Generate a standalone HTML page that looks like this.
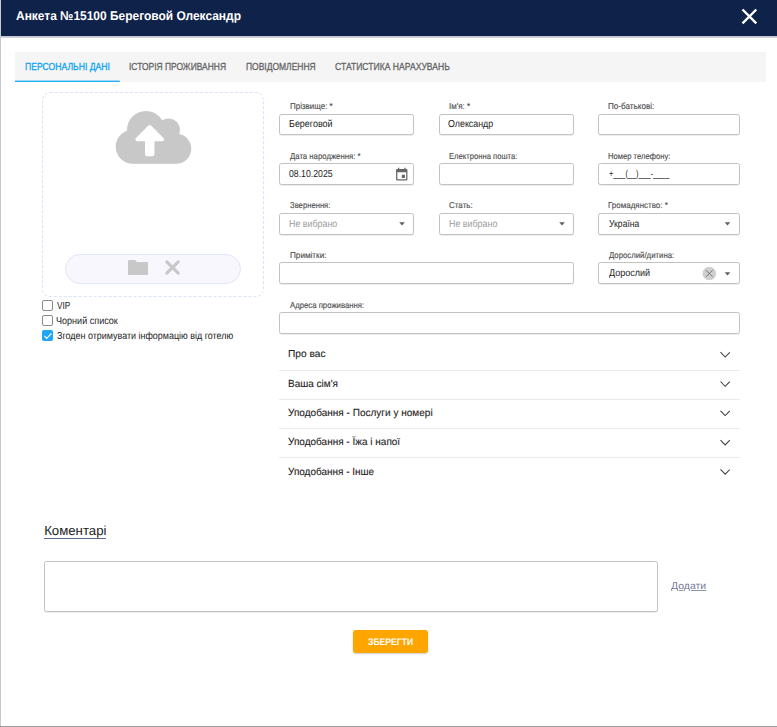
<!DOCTYPE html>
<html><head><meta charset="utf-8">
<style>
*{box-sizing:border-box;margin:0;padding:0}
html,body{width:777px;height:727px;overflow:hidden;background:#fff;font-family:"Liberation Sans",sans-serif;color:#222}
.a{position:absolute}
.t{position:absolute;white-space:nowrap;transform-origin:0 0;text-rendering:geometricPrecision}
.inp{position:absolute;height:22px;border:1px solid #c2c2c2;border-radius:2.5px;background:#fff;box-shadow:0 1px 0 rgba(0,0,0,0.07)}
.sep{position:absolute;left:279px;width:461px;height:1px;background:#e6ebef}
.cb{position:absolute;left:42px;width:11px;height:11px;border:1.2px solid #8a8a8a;border-radius:2px;background:#fff}
</style></head><body>
<div class="a" style="left:0;top:0;width:777px;height:36px;background:#0f2249"></div>
<div class="a" style="left:0;top:36px;width:777px;height:2px;background:linear-gradient(#c0c4cc,#d0d3d9)"></div>
<div class="a" style="left:0;top:0;width:1px;height:727px;background:#c9c9c9"></div>
<div class="a" style="left:0;top:726px;width:777px;height:1px;background:#9a9a9a"></div>

<div class="a" style="left:15px;top:52px;width:751px;height:30px;background:#f5f5f5"></div>
<div class="a" style="left:15px;top:80px;width:105px;height:2px;background:linear-gradient(#9ad8f8 0 50%,#2aaef2 50%);border-radius:0 1px 1px 0"></div>

<div class="a" style="left:42px;top:92px;width:222px;height:205px;border:1px dashed #dbe3fb;border-radius:8px"></div>
<div class="a" style="left:65px;top:254px;width:176px;height:30px;border:1px solid #dfe6fb;border-radius:15px;background:#f7f7fd"></div>

<div class="cb" style="top:300px"></div>
<div class="cb" style="top:315px"></div>
<div class="cb" style="top:330px;border:none;background:#1fa5f3"></div>

<div class="inp" style="left:279px;top:114px;width:135px;height:21px"></div>
<div class="inp" style="left:439px;top:114px;width:135px;height:21px"></div>
<div class="inp" style="left:598px;top:114px;width:142px;height:21px"></div>
<div class="inp" style="left:279px;top:163px;width:135px"></div>
<div class="inp" style="left:439px;top:163px;width:135px"></div>
<div class="inp" style="left:598px;top:163px;width:142px"></div>
<div class="inp" style="left:279px;top:213px;width:135px"></div>
<div class="inp" style="left:439px;top:213px;width:135px"></div>
<div class="inp" style="left:598px;top:213px;width:142px"></div>
<div class="inp" style="left:279px;top:262px;width:295px"></div>
<div class="inp" style="left:598px;top:262px;width:142px"></div>
<div class="inp" style="left:279px;top:312px;width:461px"></div>

<div class="sep" style="top:370px"></div>
<div class="sep" style="top:399px"></div>
<div class="sep" style="top:428px"></div>
<div class="sep" style="top:457px"></div>

<div class="a" style="left:44px;top:538px;width:62px;height:1.2px;background:#5a6a90"></div>
<div class="inp" style="left:44px;top:561px;width:614px;height:51px"></div>
<div class="a" style="left:353px;top:630px;width:75px;height:23px;background:#ffa500;border-radius:3px;box-shadow:0 1px 2px rgba(0,0,0,0.2)"></div>

<svg class="a" style="left:0;top:0" width="777" height="727" viewBox="0 0 777 727">
<path d="M742.5 9.5L756.3 23.3M756.3 9.5L742.5 23.3" stroke="#fff" stroke-width="2.4"/>
<g transform="translate(115.7 110.9) scale(0.1181)"><path fill="#c8c8c8" transform="translate(0 -32)" d="M537.6 226.6c4.1-10.7 6.4-22.4 6.4-34.6 0-53-43-96-96-96-19.7 0-38.1 6-53.3 16.2C367 64.2 315.3 32 256 32c-88.4 0-160 71.6-160 160 0 2.7.1 5.4.2 8.1C40.2 219.8 0 273.2 0 336c0 79.5 64.5 144 144 144h368c70.7 0 128-57.3 128-128 0-61.9-44-113.6-102.4-125.4zM393.4 288H328v112c0 8.8-7.2 16-16 16h-48c-8.8 0-16-7.2-16-16V288h-65.4c-14.3 0-21.4-17.2-11.3-27.3l105.4-105.4c6.2-6.2 16.4-6.2 22.6 0l105.4 105.4c10.1 10.1 2.9 27.3-11.3 27.3z"/></g>
<path fill="#c8c8c8" d="M128 261Q128 260 129 260L135 260L137 262L147 262Q148 262 148 263L148 274Q148 275 147 275L129 275Q128 275 128 274Z"/>
<path d="M166.8 261.8L178.2 273.2M178.2 261.8L166.8 273.2" stroke="#c8c8c8" stroke-width="3.1" stroke-linecap="round"/>
<path d="M44.4 335.9L46.7 338.3L51.5 333.3" stroke="#fff" stroke-width="1.2" fill="none"/>
<g transform="translate(394.2 167.2) scale(0.63)"><path fill="#666" d="M17 12h-5v5h5v-5zM16 1v2H8V1H6v2H5c-1.11 0-1.99.9-1.99 2L3 19c0 1.1.89 2 2 2h14c1.1 0 2-.9 2-2V5c0-1.1-.9-2-2-2h-1V1h-2zm3 18H5V8h14v11z"/></g>
<path fill="#606060" d="M399.2 222.3H404.8L402 225.5Z"/>
<path fill="#606060" d="M559.2 222.3H564.8L562 225.5Z"/>
<path fill="#606060" d="M724.7 222.3H730.3L727.5 225.5Z"/>
<path fill="#606060" d="M724.7 272.2H730.3L727.5 275.4Z"/>
<circle cx="709.3" cy="273.5" r="6.8" fill="#cfcfcf"/>
<path d="M706 270.2L712.6 276.8M712.6 270.2L706 276.8" stroke="#6a6a6a" stroke-width="0.9"/>
<g stroke="#3d3d3d" stroke-width="1.05" fill="none">
<path d="M720.5 352.2L725.2 357L729.8 352.3"/>
<path d="M720.5 381.5L725.2 386.3L729.8 381.6"/>
<path d="M720.5 410.8L725.2 415.6L729.8 410.9"/>
<path d="M720.5 440.1L725.2 444.9L729.8 440.2"/>
<path d="M720.5 469.4L725.2 474.2L729.8 469.5"/>
</g>
</svg>
<div class="t" style="left:15.76px;top:9.71px;font-size:12.65px;line-height:12.65px;font-weight:bold;color:#fff;transform:scaleX(0.945);">Анкета №15100 Береговой Олександр</div>
<div class="t" style="left:25.21px;top:62.80px;font-size:10.17px;line-height:10.17px;color:#0ea5f0;transform:scaleX(0.848);-webkit-text-stroke:0.3px currentColor;">ПЕРСОНАЛЬНІ ДАНІ</div>
<div class="t" style="left:129.24px;top:62.80px;font-size:10.17px;line-height:10.17px;color:#666;transform:scaleX(0.832);-webkit-text-stroke:0.3px currentColor;">ІСТОРІЯ ПРОЖИВАННЯ</div>
<div class="t" style="left:245.82px;top:62.80px;font-size:10.17px;line-height:10.17px;color:#666;transform:scaleX(0.835);-webkit-text-stroke:0.3px currentColor;">ПОВІДОМЛЕННЯ</div>
<div class="t" style="left:335.47px;top:62.80px;font-size:10.17px;line-height:10.17px;color:#666;transform:scaleX(0.846);-webkit-text-stroke:0.3px currentColor;">СТАТИСТИКА НАРАХУВАНЬ</div>
<div class="t" style="left:289.56px;top:102.01px;font-size:8.72px;line-height:8.72px;color:#505050;transform:scaleX(0.914);-webkit-text-stroke:0.15px currentColor;">Прізвище: *</div>
<div class="t" style="left:449.29px;top:102.01px;font-size:8.72px;line-height:8.72px;color:#505050;transform:scaleX(0.911);-webkit-text-stroke:0.15px currentColor;">Ім'я: *</div>
<div class="t" style="left:608.35px;top:102.01px;font-size:8.72px;line-height:8.72px;color:#505050;transform:scaleX(0.932);-webkit-text-stroke:0.15px currentColor;">По-батькові:</div>
<div class="t" style="left:290.00px;top:151.91px;font-size:8.58px;line-height:8.58px;color:#505050;transform:scaleX(0.904);-webkit-text-stroke:0.15px currentColor;">Дата народження: *</div>
<div class="t" style="left:449.39px;top:151.91px;font-size:8.58px;line-height:8.58px;color:#505050;transform:scaleX(0.890);-webkit-text-stroke:0.15px currentColor;">Електронна пошта:</div>
<div class="t" style="left:608.39px;top:151.91px;font-size:8.58px;line-height:8.58px;color:#505050;transform:scaleX(0.890);-webkit-text-stroke:0.15px currentColor;">Номер телефону:</div>
<div class="t" style="left:289.77px;top:201.11px;font-size:8.58px;line-height:8.58px;color:#505050;transform:scaleX(0.894);-webkit-text-stroke:0.15px currentColor;">Звернення:</div>
<div class="t" style="left:449.00px;top:201.11px;font-size:8.58px;line-height:8.58px;color:#505050;transform:scaleX(0.934);-webkit-text-stroke:0.15px currentColor;">Стать:</div>
<div class="t" style="left:608.36px;top:201.11px;font-size:8.58px;line-height:8.58px;color:#505050;transform:scaleX(0.930);-webkit-text-stroke:0.15px currentColor;">Громадянство: *</div>
<div class="t" style="left:289.65px;top:251.20px;font-size:8.58px;line-height:8.58px;color:#505050;transform:scaleX(0.950);-webkit-text-stroke:0.15px currentColor;">Примітки:</div>
<div class="t" style="left:609.40px;top:251.20px;font-size:8.58px;line-height:8.58px;color:#505050;transform:scaleX(0.907);-webkit-text-stroke:0.15px currentColor;">Дорослий/дитина:</div>
<div class="t" style="left:290.30px;top:300.70px;font-size:8.58px;line-height:8.58px;color:#505050;transform:scaleX(0.904);-webkit-text-stroke:0.15px currentColor;">Адреса проживання:</div>
<div class="t" style="left:289.18px;top:119.90px;font-size:10.17px;line-height:10.17px;color:#222;transform:scaleX(0.883);">Береговой</div>
<div class="t" style="left:448.45px;top:119.90px;font-size:10.17px;line-height:10.17px;color:#222;transform:scaleX(0.872);">Олександр</div>
<div class="t" style="left:289.44px;top:169.90px;font-size:10.17px;line-height:10.17px;color:#222;transform:scaleX(0.858);">08.10.2025</div>
<div class="t" style="left:608.51px;top:169.90px;font-size:10.17px;line-height:10.17px;color:#222;transform:scaleX(0.718);">+___(__)___-____</div>
<div class="t" style="left:289.29px;top:219.90px;font-size:10.17px;line-height:10.17px;color:#9b9b9b;transform:scaleX(0.873);">Не вибрано</div>
<div class="t" style="left:448.69px;top:219.90px;font-size:10.17px;line-height:10.17px;color:#9b9b9b;transform:scaleX(0.875);">Не вибрано</div>
<div class="t" style="left:608.83px;top:219.90px;font-size:10.17px;line-height:10.17px;color:#222;transform:scaleX(0.848);">Україна</div>
<div class="t" style="left:608.60px;top:269.01px;font-size:9.88px;line-height:9.88px;color:#222;transform:scaleX(0.911);">Дорослий</div>
<div class="t" style="left:57.00px;top:302.01px;font-size:10.17px;line-height:10.17px;color:#222;transform:scaleX(0.810);">VIP</div>
<div class="t" style="left:56.37px;top:317.01px;font-size:10.17px;line-height:10.17px;color:#222;transform:scaleX(0.891);">Чорний список</div>
<div class="t" style="left:56.73px;top:332.01px;font-size:10.17px;line-height:10.17px;color:#222;transform:scaleX(0.882);">Згоден отримувати інформацію від готелю</div>
<div class="t" style="left:287.69px;top:350.10px;font-size:10.03px;line-height:10.03px;color:#222;transform:scaleX(1.015);-webkit-text-stroke:0.1px currentColor;">Про вас</div>
<div class="t" style="left:287.70px;top:379.71px;font-size:10.32px;line-height:10.32px;color:#222;transform:scaleX(0.969);-webkit-text-stroke:0.1px currentColor;">Ваша сім'я</div>
<div class="t" style="left:288.30px;top:409.01px;font-size:10.32px;line-height:10.32px;color:#222;transform:scaleX(0.973);-webkit-text-stroke:0.1px currentColor;">Уподобання - Послуги у номері</div>
<div class="t" style="left:288.30px;top:438.32px;font-size:10.32px;line-height:10.32px;color:#222;transform:scaleX(0.970);-webkit-text-stroke:0.1px currentColor;">Уподобання - Їжа і напої</div>
<div class="t" style="left:288.30px;top:467.60px;font-size:10.32px;line-height:10.32px;color:#222;transform:scaleX(0.966);-webkit-text-stroke:0.1px currentColor;">Уподобання - Інше</div>
<div class="t" style="left:44.14px;top:523.91px;font-size:13.23px;line-height:13.23px;color:#222;">Коментарі</div>
<div class="t" style="left:671.00px;top:581.81px;font-size:9.74px;line-height:9.74px;color:#75779a;transform:scaleX(1.074);text-decoration:underline;text-decoration-color:#8f91ab;">Додати</div>
<div class="t" style="left:368.33px;top:637.81px;font-size:9.59px;line-height:9.59px;font-weight:bold;color:#fff;transform:scaleX(0.898);">ЗБЕРЕГТИ</div>
</body></html>
